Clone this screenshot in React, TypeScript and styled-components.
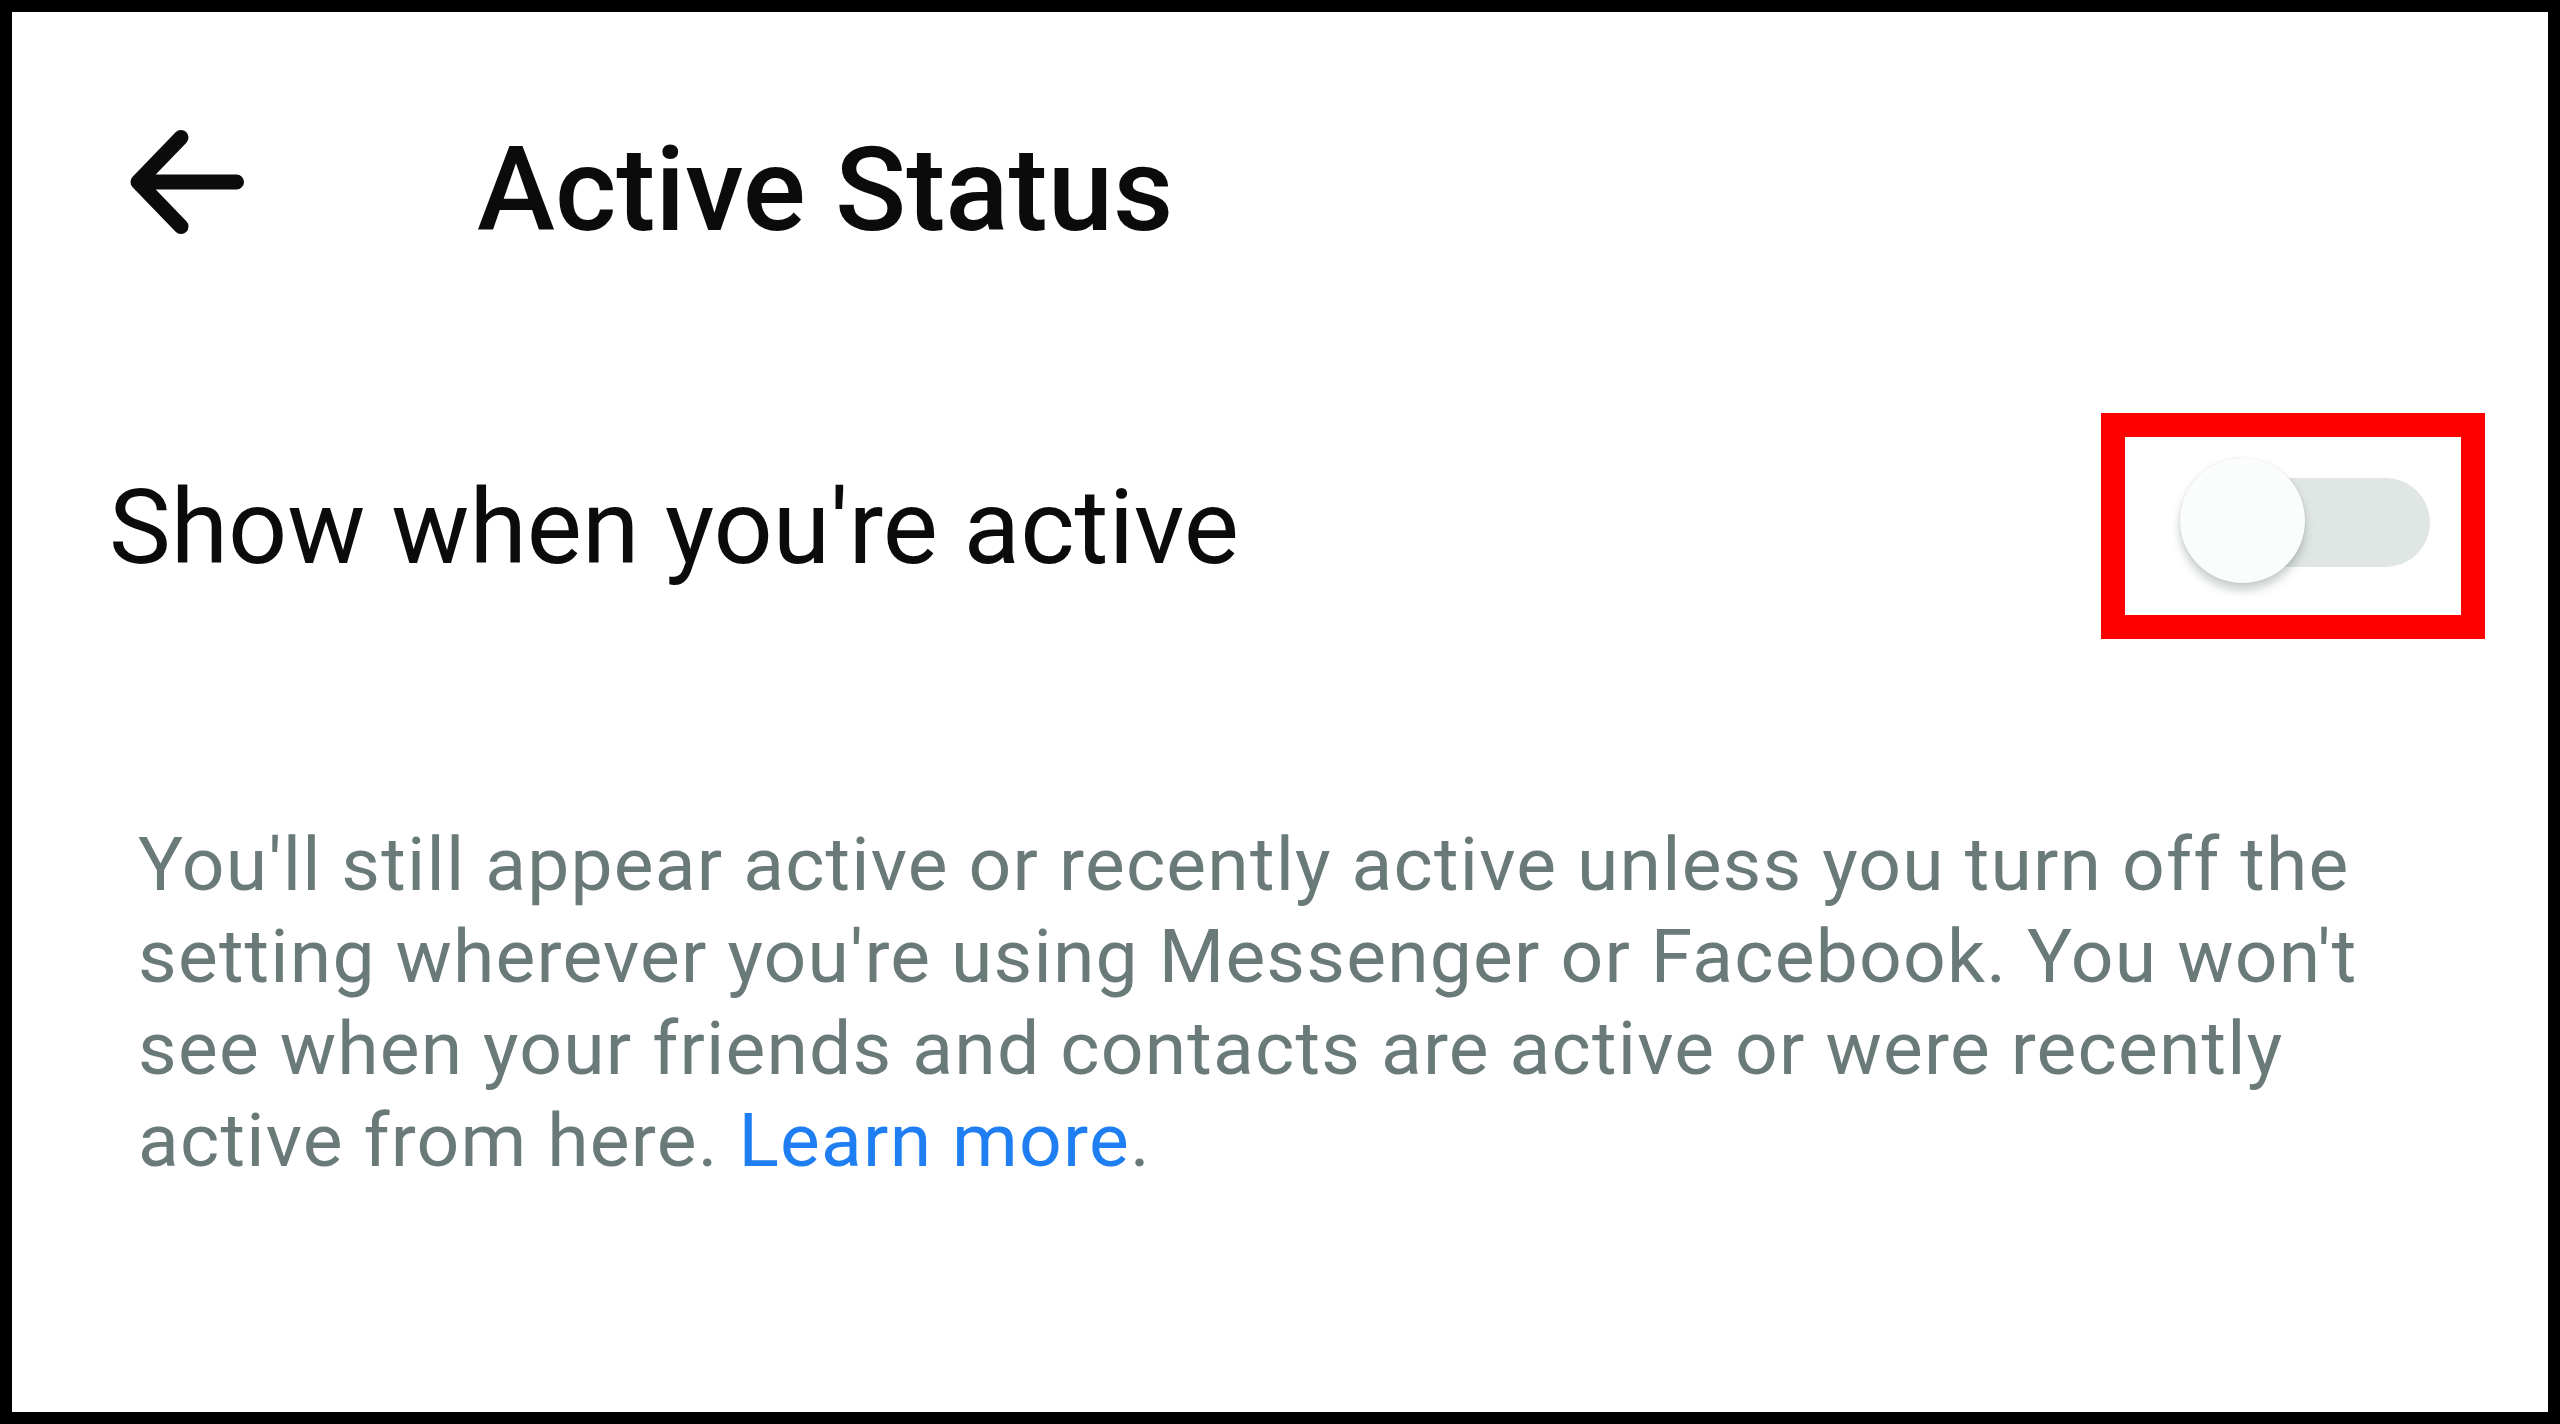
import styled, { createGlobalStyle } from "styled-components";

const GlobalStyle = createGlobalStyle`
  html, body {
    margin: 0;
    padding: 0;
    background: #000;
  }
  body {
    font-family: Roboto, "Noto Sans", sans-serif;
  }
`;

/**
 * Messenger "Active Status" settings screen, with the toggle boxed in red
 */
const App = () => {
  return (
    <>
      <GlobalStyle />
      <Frame>
        {/* Top bar */}
        <Header>
          <BackButton aria-label="Back">
            <svg width="120" height="104" viewBox="0 0 120 104">
              <path
                d="M52 7.5 L9 52 L52 96.5 M9 52 H107.5"
                fill="none"
                stroke="#0b0b0b"
                strokeWidth="15"
                strokeLinecap="round"
                strokeLinejoin="round"
              />
            </svg>
          </BackButton>
          <Title>Active Status</Title>
        </Header>

        {/* Toggle row */}
        <SettingRow>
          <SettingLabel>Show when you're active</SettingLabel>
          <Highlight>
            <Switch role="switch" aria-checked={false}>
              <Track />
              <Thumb />
            </Switch>
          </Highlight>
        </SettingRow>

        {/* Explanation */}
        <Description>
          You'll still appear active or recently active unless you turn off the
          setting wherever you're using Messenger or Facebook. You won't see
          when your friends and contacts are active or were recently active
          from here. <LearnMore>Learn more</LearnMore>.
        </Description>
      </Frame>
    </>
  );
};

const Frame = styled.div`
  box-sizing: border-box;
  width: 2560px;
  height: 1424px;
  border: 12px solid #000;
  background: #fff;
  display: flex;
  flex-direction: column;
`;

const Header = styled.div`
  height: 346px;
  display: flex;
  align-items: center;
  padding-left: 117px;
`;

const BackButton = styled.div`
  width: 120px;
  height: 104px;
  display: flex;
  margin-right: 228px;
  margin-top: -6px;
`;

const Title = styled.h1`
  margin: 0;
  font-family: Roboto, "Noto Sans", sans-serif;
  font-size: 117.5px;
  font-weight: 500;
  color: #0b0b0b;
  line-height: 1;
  margin-top: 12px;
`;

const SettingRow = styled.div`
  height: 336px;
  display: flex;
  align-items: center;
  justify-content: space-between;
  padding: 0 63px 0 97px;
`;

const SettingLabel = styled.span`
  font-family: Roboto, "Noto Sans", sans-serif;
  font-size: 104px;
  font-weight: 400;
  color: #0b0b0b;
  line-height: 1;
  margin-top: 4px;
`;

const Highlight = styled.div`
  box-sizing: border-box;
  width: 384px;
  height: 226px;
  border: 24px solid #ff0000;
  display: flex;
  align-items: center;
  justify-content: center;
  padding: 0 0 10px 24px;
`;

const Switch = styled.div`
  position: relative;
  width: 250px;
  height: 127px;
`;

const Track = styled.div`
  position: absolute;
  left: 20px;
  right: 0;
  top: 20px;
  height: 89px;
  border-radius: 45px;
  background: #e0e6e4;
`;

const Thumb = styled.div`
  position: absolute;
  left: 0;
  top: 0;
  width: 125px;
  height: 125px;
  border-radius: 50%;
  background: #fbfcfc;
  box-shadow: 0 7px 10px rgba(60, 80, 80, 0.28), 0 0 3px rgba(0, 0, 0, 0.08);
`;

const Description = styled.p`
  margin: 0;
  padding: 124px 90px 0 126px;
  font-family: Roboto, "Noto Sans", sans-serif;
  font-size: 75px;
  letter-spacing: 1.2px;
  line-height: 92px;
  color: #697a79;
`;

const LearnMore = styled.a`
  color: #1f7ff2;
  text-decoration: none;
  cursor: pointer;
`;

export default App;
